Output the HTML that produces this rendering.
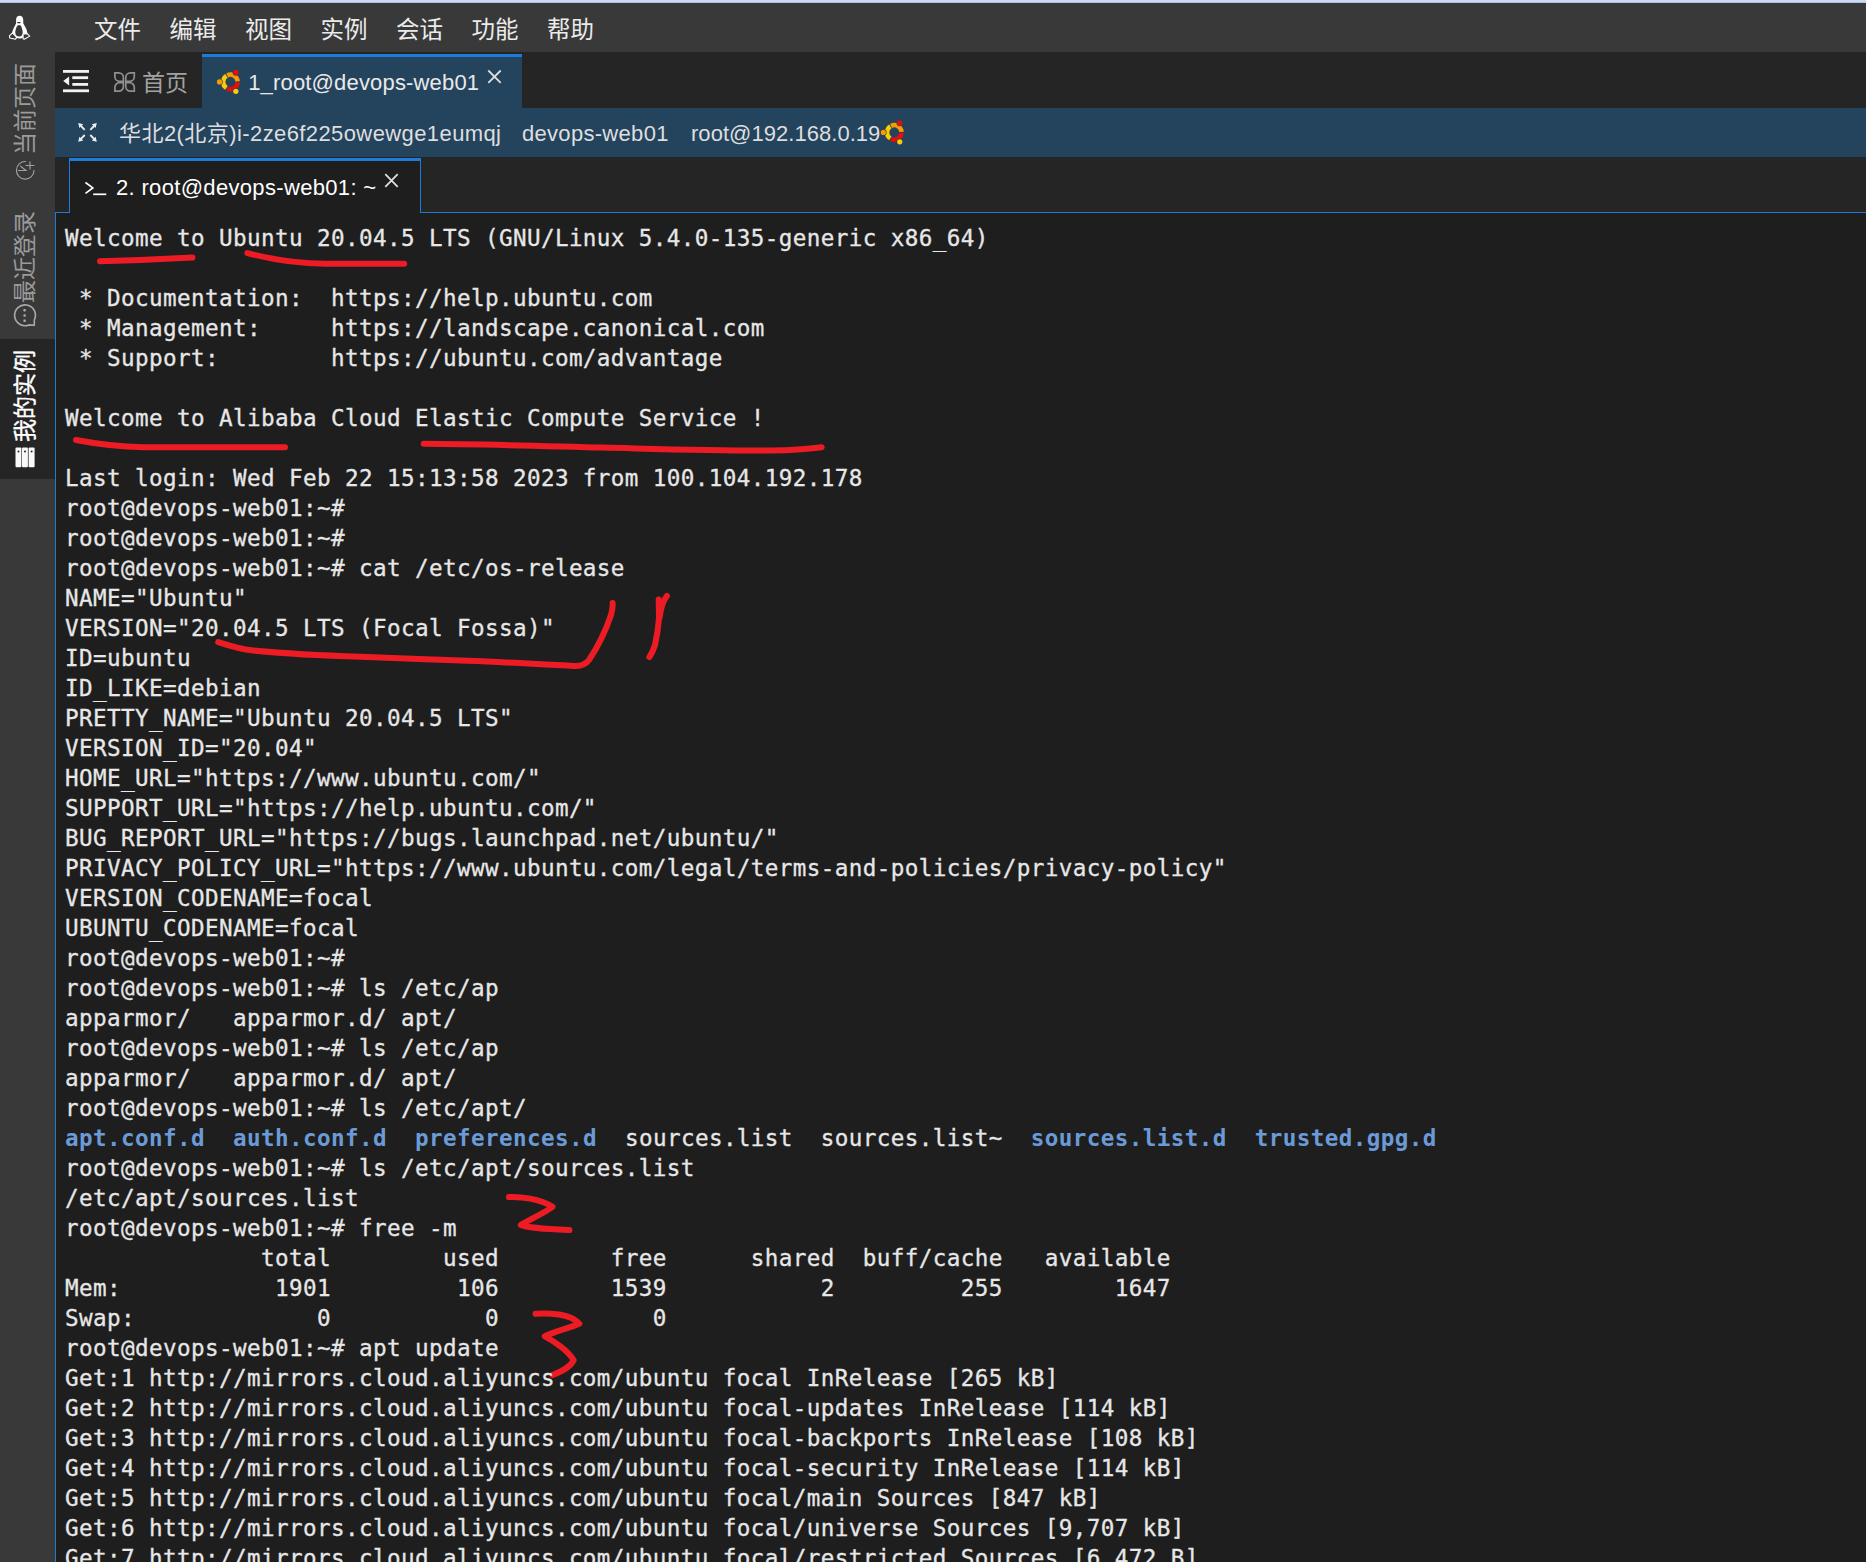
<!DOCTYPE html>
<html lang="zh-CN">
<head>
<meta charset="utf-8">
<title>1_root@devops-web01</title>
<style>
*{box-sizing:border-box;margin:0;padding:0}
html,body{width:1866px;height:1562px;overflow:hidden;background:#1e1e1e}
body{position:relative;font-family:"Liberation Sans","Noto Sans CJK SC",sans-serif;color:#e6e6e6}
.abs{position:absolute}
#topline{left:0;top:0;width:1866px;height:3px;background:linear-gradient(#c9d9f6 0,#c9d9f6 66%,#9da9c4 100%)}
#menubar{left:0;top:3px;width:1866px;height:49px;background:#393939}
#sidebar{left:0;top:52px;width:55px;height:1510px;background:#393939}
#tabbar{left:55px;top:52px;width:1811px;height:56px;background:#252525}
#acttab{left:202px;top:54px;width:320px;height:54px;background:#24445e;border-top:3px solid #1f7bd8}
#infobar{left:55px;top:108px;width:1811px;height:49px;background:#24445e}
#termtabs{left:55px;top:157px;width:1811px;height:55px;background:#252525}
#termtab{left:69px;top:158px;width:352px;height:55px;background:#1e1e1e;border-top:3px solid #1f7bd8;border-left:1px solid #1f7bd8;border-right:1px solid #1f7bd8}
#termline{left:55px;top:212px;width:1811px;height:1px;background:#1f7bd8}
#term{left:55px;top:212px;width:1811px;height:1350px;background:#1e1e1e;border-left:1px solid #1f7bd8}
.menu{top:3px;height:49px;line-height:49px;font-size:24px;color:#e8e8e8;white-space:nowrap}
pre#tt{position:absolute;left:65px;top:223px;font-family:"DejaVu Sans Mono","Liberation Mono",monospace;font-size:22.6px;line-height:30px;color:#e7e7e7;white-space:pre;letter-spacing:0.394px;-webkit-text-stroke:0.3px #e7e7e7}
pre#tt b{color:#6b9bd7;font-weight:bold;-webkit-text-stroke:0 transparent}

.t{position:absolute;white-space:pre;line-height:30px;height:30px;font-size:22px;color:#e9e9e9}
.cj{font-family:"Liberation Sans","Noto Sans CJK SC",sans-serif}
.mi{position:absolute;top:15.3px;height:30px;line-height:30px;font-size:23.5px;color:#ebebeb;white-space:pre}
.vt{position:absolute;white-space:pre;height:30px;line-height:30px;font-size:23px;transform:rotate(-90deg);transform-origin:center center;text-align:center;color:#9b9b9b}
svg{position:absolute;overflow:visible}
#sideact{left:0;top:339px;width:55px;height:140px;background:#252525}
</style>
</head>
<body>
<div id="topline" class="abs"></div>
<div id="menubar" class="abs"></div>
<div id="sidebar" class="abs"></div>
<div id="tabbar" class="abs"></div>
<div id="acttab" class="abs"></div>
<div id="infobar" class="abs"></div>
<div id="termtabs" class="abs"></div>
<div id="term" class="abs"></div>
<div id="termline" class="abs"></div>
<div id="termtab" class="abs"></div>

<!-- menu -->
<span class="mi" style="left:94px">文件</span>
<span class="mi" style="left:169.5px">编辑</span>
<span class="mi" style="left:245px">视图</span>
<span class="mi" style="left:320.5px">实例</span>
<span class="mi" style="left:396px">会话</span>
<span class="mi" style="left:471.5px">功能</span>
<span class="mi" style="left:547px">帮助</span>
<!-- sidebar -->
<div id="sideact" class="abs"></div>
<div class="vt" id="v1" style="left:-35px;top:94px;width:120px">当前页面</div>
<div class="vt" id="v2" style="left:-35px;top:242px;width:120px">最近登录</div>
<div class="vt" id="v3" style="left:-35px;top:381px;width:120px;color:#fff;-webkit-text-stroke:0.4px #fff">我的实例</div>
<!-- tabs -->
<span class="t" id="home" style="left:142px;top:68px;font-size:23px;color:#a2a2a2">首页</span>
<span class="t" id="tab1" style="left:248.2px;top:68px;letter-spacing:0.17px">1_root@devops-web01</span>
<span class="t" id="inf1" style="left:119px;top:119px;color:#dedede;letter-spacing:0.45px">华北2(北京)</span><span class="t" id="inf1b" style="left:237px;top:119px;color:#dedede;letter-spacing:0.4px">i-2ze6f225owewge1eumqj</span>
<span class="t" id="inf2" style="left:522px;top:119px;color:#dedede;letter-spacing:0.3px">devops-web01</span>
<span class="t" id="inf3" style="left:691px;top:119px;color:#dedede;letter-spacing:0.04px">root@192.168.0.19</span>
<span class="t" id="tt1" style="left:116px;top:172.5px;color:#fff;letter-spacing:0.33px">2. root@devops-web01: ~</span>

<svg id="ov" width="1866" height="1562" viewBox="0 0 1866 1562" style="left:0;top:0">
<!-- tux -->
<g id="tux">
<path d="M19.6,15.8 C17.5,15.8 16.1,17.3 16.1,19.5 L16.1,23.2 C15.2,25.4 12.7,29.4 12,32.8 L16.6,37.8 C18.2,38.8 21.4,38.8 22.9,37.5 L23,33.8 L27.3,33.6 C27.5,30 24.9,26 23.3,23.4 L23.2,19.5 C23.2,17.3 21.7,15.8 19.6,15.8 Z" fill="#fff"/>
<path d="M17.3,25.7 C16.1,27.6 15.1,30.5 15.3,33 C15.5,35.6 17.4,36.5 19.2,36.5 C21.3,36.5 22.8,35.2 22.7,32.6 C22.6,30 21.9,27.5 20.9,25.7 C20.1,24.7 18.1,24.7 17.3,25.7 Z" fill="#393939"/>
<rect x="17.1" y="21.9" width="3.6" height="1.3" rx="0.6" fill="#393939"/>
<circle cx="18" cy="20.1" r="0.45" fill="#bbb"/><circle cx="20.6" cy="20.1" r="0.45" fill="#bbb"/>
<path d="M12.6,32.8 L9.4,35.9 L9.7,38 L15.5,39.2 L16.8,37.7 Z" fill="#393939" stroke="#fff" stroke-width="1.1" stroke-linejoin="round"/>
<path d="M23.1,33.9 L23.1,38.7 L24.3,39.3 L29.7,36.1 L27.3,33.6 Z" fill="#393939" stroke="#fff" stroke-width="1.1" stroke-linejoin="round"/>
</g>
<!-- sidebar icons -->
<g fill="none" stroke="#a0a0a0" stroke-width="1.15" stroke-linecap="round">
<path d="M25.6,161.5 A8.8,8.8 0 1 0 34,170.4"/>
<path d="M18.3,170.5 L26,170.5 L20.6,166.2"/>
<path d="M26,165.5 L34,165.5 M30,161.9 L30,169.1"/>
</g>
<g fill="none" stroke="#a9a9a9" stroke-width="1.6" stroke-linejoin="round">
<path d="M34.3,320 A10.4,10.4 0 1 0 29,324.9 L34.3,325.2 Z"/>
</g>
<g fill="#a9a9a9"><rect x="23.4" y="309" width="2.4" height="2.4" rx="0.6"/><rect x="23.4" y="314.3" width="2.4" height="2.4" rx="0.6"/><rect x="23.4" y="319.5" width="2.4" height="2.4" rx="0.6"/></g>
<g fill="#fafafa"><rect x="15.5" y="447.4" width="5.9" height="19.8" rx="1"/><rect x="22" y="447.4" width="5.9" height="19.8" rx="1"/><rect x="28.6" y="447.4" width="6" height="19.8" rx="1"/></g>
<g fill="#252525"><circle cx="18.5" cy="451.4" r="1"/><circle cx="25" cy="451.4" r="1"/><circle cx="31.6" cy="451.4" r="1"/></g>
<!-- indent icon -->
<g fill="#f2f2f2"><rect x="63" y="70" width="26" height="2.8"/><rect x="72.3" y="76.3" width="15.8" height="2.8"/><rect x="72.3" y="83" width="15.8" height="2.8"/><rect x="63" y="89.4" width="26" height="2.8"/><path d="M63.2,81 L69.1,76.6 L69.1,85.4 Z"/></g>
<!-- home icon -->
<g fill="none" stroke="#8f8f8f" stroke-width="1.7">
<path d="M114.9,72.8 H118.80 A4.6,4.6 0 0 1 123.4,77.40 V81.3 H119.50 A4.6,4.6 0 0 1 114.9,76.70 Z"/>
<path d="M134.3,72.8 H130.40 A4.6,4.6 0 0 0 125.8,77.40 V81.3 H129.70 A4.6,4.6 0 0 0 134.3,76.70 Z"/>
<path d="M114.9,91.2 H118.80 A4.6,4.6 0 0 0 123.4,86.60 V82.7 H119.50 A4.6,4.6 0 0 0 114.9,87.30 Z"/>
<path d="M134.3,91.2 H130.40 A4.6,4.6 0 0 1 125.8,86.60 V82.7 H129.70 A4.6,4.6 0 0 1 134.3,87.30 Z"/>
</g>
<g><path d="M226.40,87.95 A7.25,7.25 0 0 1 226.40,75.85" fill="none" stroke="#fccc00" stroke-width="4.5"/><path d="M227.17,75.41 A7.25,7.25 0 0 1 237.64,81.46" fill="none" stroke="#f99b00" stroke-width="4.5"/><path d="M237.64,82.34 A7.25,7.25 0 0 1 227.17,88.39" fill="none" stroke="#ee0a0a" stroke-width="4.5"/><circle cx="219.50" cy="81.90" r="2.6" fill="#f99b00" stroke="#24445e" stroke-width="1.3" paint-order="stroke"/><circle cx="235.85" cy="72.46" r="2.6" fill="#ee0a0a" stroke="#24445e" stroke-width="1.3" paint-order="stroke"/><circle cx="235.85" cy="91.34" r="2.6" fill="#fccc00" stroke="#24445e" stroke-width="1.3" paint-order="stroke"/></g>
<g><path d="M890.30,138.45 A7.25,7.25 0 0 1 890.30,126.35" fill="none" stroke="#fccc00" stroke-width="4.5"/><path d="M891.07,125.91 A7.25,7.25 0 0 1 901.54,131.96" fill="none" stroke="#f99b00" stroke-width="4.5"/><path d="M901.54,132.84 A7.25,7.25 0 0 1 891.07,138.89" fill="none" stroke="#ee0a0a" stroke-width="4.5"/><circle cx="883.40" cy="132.40" r="2.6" fill="#f99b00" stroke="#24445e" stroke-width="1.3" paint-order="stroke"/><circle cx="899.75" cy="122.96" r="2.6" fill="#ee0a0a" stroke="#24445e" stroke-width="1.3" paint-order="stroke"/><circle cx="899.75" cy="141.84" r="2.6" fill="#fccc00" stroke="#24445e" stroke-width="1.3" paint-order="stroke"/></g>
<!-- close x -->
<g stroke="#dedede" stroke-width="1.8" fill="none"><path d="M488.3,70.5 L500.7,82.9 M500.7,70.5 L488.3,82.9"/><path d="M385.3,174.2 L397.7,186.9 M397.7,174.2 L385.3,186.9"/></g>
<!-- expand icon -->
<g><path d="M81.00,126.00 L84.70,129.80" fill="none" stroke="#efefef" stroke-width="1.8"/><path d="M78.20,123.10 L83.20,124.30 L79.40,128.10 Z" fill="#efefef"/><path d="M81.00,138.80 L84.70,135.00" fill="none" stroke="#efefef" stroke-width="1.8"/><path d="M78.20,141.70 L83.20,140.50 L79.40,136.70 Z" fill="#efefef"/><path d="M94.00,126.00 L90.30,129.80" fill="none" stroke="#efefef" stroke-width="1.8"/><path d="M96.80,123.10 L91.80,124.30 L95.60,128.10 Z" fill="#efefef"/><path d="M94.00,138.80 L90.30,135.00" fill="none" stroke="#efefef" stroke-width="1.8"/><path d="M96.80,141.70 L91.80,140.50 L95.60,136.70 Z" fill="#efefef"/></g>
<!-- prompt icon -->
<g fill="none" stroke="#fff" stroke-width="1.7"><path d="M85.5,182.5 L92.8,187.9 L85.5,193.4"/><path d="M93.2,194.3 L106.3,194.3"/></g>
<!-- red annotations -->
<g fill="none" stroke="#ed1c24" stroke-width="6" stroke-linecap="round" stroke-linejoin="round">
<path d="M100,261.3 Q146,260.2 192.4,257.6"/>
<path d="M247.4,253.1 C270,259 300,263.7 324.8,263.7 L404.2,263.7"/>
<path d="M76,440 Q110,446.5 143.6,447.2 L285,447.2"/>
<path d="M423.7,443.8 C480,444 540,446 603.5,447.6 C660,449 720,451 770.7,450.5 Q800,450 821.7,447.2"/>
<path d="M218.2,642.1 C230,646 240,649 253.6,650.6 C290,654 320,655.5 360.8,656.8 C400,658 430,659.5 468,660.8 C510,662.3 540,664.5 575,666 C582,666.2 586,664 589,660 C597,648 606,630 611,615 Q613,608 612.6,603"/>
<path d="M666.9,595.9 Q661.5,602 659.6,618"/>
<path d="M658.7,599.6 L659,618 Q658,632 655,645 Q652.8,652 649.4,657"/>
<path d="M508.9,1197 C520,1196.5 540,1198.5 552.5,1206.8 C545,1213 530,1219 520.8,1225 C528,1228 545,1228.8 569.4,1230"/>
<path d="M535.6,1313.8 C548,1313 570,1313.5 579.3,1323.7 C570,1328 552,1332 544.8,1336.3 C552,1340 568,1350 573.7,1360.3 C570,1368 560,1372 552.5,1375"/>
</g>
</svg>
<pre id="tt">Welcome to Ubuntu 20.04.5 LTS (GNU/Linux 5.4.0-135-generic x86_64)

 * Documentation:  https://help.ubuntu.com
 * Management:     https://landscape.canonical.com
 * Support:        https://ubuntu.com/advantage

Welcome to Alibaba Cloud Elastic Compute Service !

Last login: Wed Feb 22 15:13:58 2023 from 100.104.192.178
root@devops-web01:~#
root@devops-web01:~#
root@devops-web01:~# cat /etc/os-release
NAME="Ubuntu"
VERSION="20.04.5 LTS (Focal Fossa)"
ID=ubuntu
ID_LIKE=debian
PRETTY_NAME="Ubuntu 20.04.5 LTS"
VERSION_ID="20.04"
HOME_URL="https://www.ubuntu.com/"
SUPPORT_URL="https://help.ubuntu.com/"
BUG_REPORT_URL="https://bugs.launchpad.net/ubuntu/"
PRIVACY_POLICY_URL="https://www.ubuntu.com/legal/terms-and-policies/privacy-policy"
VERSION_CODENAME=focal
UBUNTU_CODENAME=focal
root@devops-web01:~#
root@devops-web01:~# ls /etc/ap
apparmor/   apparmor.d/ apt/
root@devops-web01:~# ls /etc/ap
apparmor/   apparmor.d/ apt/
root@devops-web01:~# ls /etc/apt/
<b>apt.conf.d</b>  <b>auth.conf.d</b>  <b>preferences.d</b>  sources.list  sources.list~  <b>sources.list.d</b>  <b>trusted.gpg.d</b>
root@devops-web01:~# ls /etc/apt/sources.list
/etc/apt/sources.list
root@devops-web01:~# free -m
              total        used        free      shared  buff/cache   available
Mem:           1901         106        1539           2         255        1647
Swap:             0           0           0
root@devops-web01:~# apt update
Get:1 http://mirrors.cloud.aliyuncs.com/ubuntu focal InRelease [265 kB]
Get:2 http://mirrors.cloud.aliyuncs.com/ubuntu focal-updates InRelease [114 kB]
Get:3 http://mirrors.cloud.aliyuncs.com/ubuntu focal-backports InRelease [108 kB]
Get:4 http://mirrors.cloud.aliyuncs.com/ubuntu focal-security InRelease [114 kB]
Get:5 http://mirrors.cloud.aliyuncs.com/ubuntu focal/main Sources [847 kB]
Get:6 http://mirrors.cloud.aliyuncs.com/ubuntu focal/universe Sources [9,707 kB]
Get:7 http://mirrors.cloud.aliyuncs.com/ubuntu focal/restricted Sources [6,472 B]</pre>
</body>
</html>
